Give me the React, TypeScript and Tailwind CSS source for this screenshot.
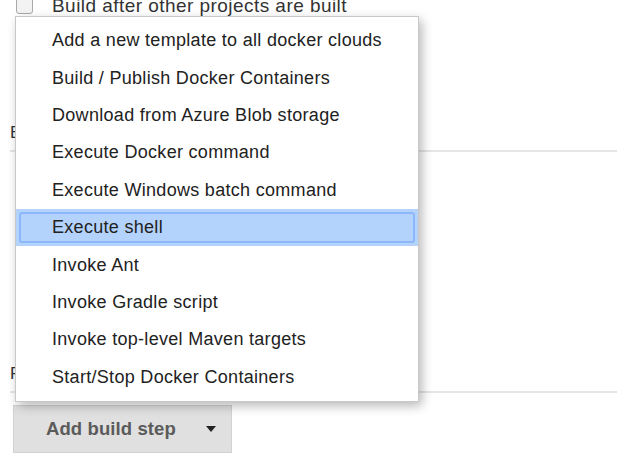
import React from "react";

const items = [
  "Add a new template to all docker clouds",
  "Build / Publish Docker Containers",
  "Download from Azure Blob storage",
  "Execute Docker command",
  "Execute Windows batch command",
  "Execute shell",
  "Invoke Ant",
  "Invoke Gradle script",
  "Invoke top-level Maven targets",
  "Start/Stop Docker Containers",
];

export default function App() {
  return (
    <div
      className="relative h-[469px] w-[617px] overflow-hidden bg-white"
      style={{ fontFamily: '"Liberation Sans", Arial, sans-serif' }}
    >
      {/* background page */}
      <div className="flex flex-col">
        <div className="-mt-[8px] flex h-[26px] items-center pl-[16px]">
          <div className="h-[17px] w-[17px] rounded-[3px] border border-[#a9a9a9] bg-[#f3f3f3]" />
          <span className="ml-[19px] mt-[3px] text-[19px] tracking-[0.45px] text-[#333]">Build after other projects are built</span>
        </div>
        <div className="mt-[105px] pl-[10px] text-[17px] leading-[20px] text-[#333]">Build</div>
        <div className="ml-[10px] mt-[7px] h-[2px] bg-[#e5e5e5]" />
        <div className="mt-[212px] pl-[10px] text-[17px] leading-[20px] text-[#333]">Post-build Actions</div>
        <div className="ml-[10px] mt-[7px] h-[2px] bg-[#e5e5e5]" />
        <div className="ml-[13px] mt-[12px] flex h-[48px] w-[219px] items-center border border-[#d2d2d2] bg-[#e0e0e0]">
          <span className="ml-[32px] text-[18.5px] font-bold tracking-[0.1px] text-[#5b5b5b]">Add build step</span>
          <svg className="ml-[30px]" width="10" height="6" viewBox="0 0 10 6">
            <path d="M0 0 L10 0 L5 6 Z" fill="#222" />
          </svg>
        </div>
      </div>

      {/* dropdown menu */}
      <div className="absolute left-[15px] top-[16px] flex h-[386px] w-[404px] flex-col border border-[#c8c8c8] bg-white py-[5px] shadow-[3px_4px_10px_rgba(0,0,0,0.28)]">
        {items.map((t) => {
          const sel = t === "Execute shell";
          return (
            <div
              key={t}
              className={
                sel
                  ? "flex h-[37.6px] items-center bg-[#b4d3fc] px-[3px] py-[3px]"
                  : "flex h-[37.6px] items-center"
              }
            >
              {sel ? (
                <div className="flex h-full w-[396px] items-center rounded-[3px] border-2 border-[#8cb8fb] pl-[31px] text-[18px] tracking-[0.3px] text-[#222]">
                  {t}
                </div>
              ) : (
                <span className="pl-[36px] text-[18px] tracking-[0.3px] text-[#222]">{t}</span>
              )}
            </div>
          );
        })}
      </div>
    </div>
  );
}
